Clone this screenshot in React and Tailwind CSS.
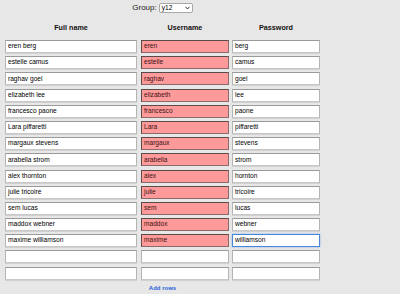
import React from 'react';

const people = [
  ['eren berg', 'eren', 'berg'],
  ['estelle camus', 'estelle', 'camus'],
  ['raghav goel', 'raghav', 'goel'],
  ['elizabeth lee', 'elizabeth', 'lee'],
  ['francesco paone', 'francesco', 'paone'],
  ['Lara piffaretti', 'Lara', 'piffaretti'],
  ['margaux stevens', 'margaux', 'stevens'],
  ['arabella strom', 'arabella', 'strom'],
  ['alex thornton', 'alex', 'hornton'],
  ['julie tricoire', 'julie', 'tricoire'],
  ['sem lucas', 'sem', 'lucas'],
  ['maddox webner', 'maddox', 'webner'],
  ['maxime williamson', 'maxime', 'williamson'],
  ['', '', ''],
  ['', '', ''],
];

function Field({ value, width, pink, focused }) {
  let cls = 'bg-white border border-[#b4b4b4] border-t-[#9a9a9a] border-b-[#c8c8c8] shadow-[0_1px_0_#d0d0d0]';
  if (pink) cls = 'bg-[#ff9a9a] border border-[#8a6a6a] border-t-[#5a4a4a] border-l-[#5a4a4a] text-[#3a1010]';
  if (focused) cls = 'bg-white border border-[#4a86d8] shadow-[0_0_2px_#8fb4ea]';
  return (
    <div className={`${width} h-[13px] px-[2px] flex items-center text-[6.6px] leading-none text-black ${cls}`}>
      <span className={pink ? 'text-[#3a1010]' : ''}>{value}</span>
    </div>
  );
}

export default function App() {
  return (
    <div className="w-[400px] h-[294px] bg-[#e7e7e7] overflow-hidden font-['Liberation_Sans',Arial,sans-serif]">
      <div className="ml-[5px] w-[315px] flex flex-col items-center">
        <div className="mt-[3px] h-[10px] flex items-center gap-[2px]">
          <span className="text-[8px] leading-none text-[#222]">Group:</span>
          <div className="w-[34px] h-[10px] bg-white border border-[#a8a8a8] rounded-[2px] flex items-center justify-between px-[2px]">
            <span className="text-[6.6px] leading-none">y12</span>
            <svg width="5" height="4" viewBox="0 0 5 4">
              <path d="M0.5 0.8 L2.5 3 L4.5 0.8" fill="none" stroke="#333" strokeWidth="1" />
            </svg>
          </div>
        </div>
        <div className="w-full mt-[11px] h-[16px] flex text-[7.2px] font-bold leading-none text-[#111]">
          <div className="w-[132px] text-center">Full name</div>
          <div className="w-[4px]" />
          <div className="w-[88px] text-center">Username</div>
          <div className="w-[3px]" />
          <div className="w-[88px] text-center">Password</div>
        </div>
        <div className="w-full flex flex-col">
          {people.map((p, i) => (
            <div key={i} className="h-[16.2px] flex gap-[4px]">
              <Field value={p[0]} width="w-[132px]" />
              <Field value={p[1]} width="w-[88px]" pink={p[1] !== ''} />
              <div className="-ml-[1px]">
                <Field value={p[2]} width="w-[88px]" focused={i === 12} />
              </div>
            </div>
          ))}
        </div>
        <div className="mt-[2px] text-[6px] font-bold leading-none text-[#2b5fd9]">Add rows</div>
      </div>
    </div>
  );
}
